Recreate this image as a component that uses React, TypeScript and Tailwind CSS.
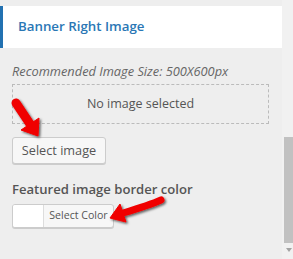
import React from "react";

const Arrows: React.FC = () => (
  <svg
    className="absolute left-0 top-0 pointer-events-none"
    width="293"
    height="259"
    viewBox="0 0 293 259"
  >
    <defs>
      <filter id="shadow" x="-20%" y="-20%" width="140%" height="140%">
        <feDropShadow dx="1.5" dy="1.5" stdDeviation="1.2" floodColor="#000" floodOpacity="0.6" />
      </filter>
    </defs>
    <g fill="#f00000" stroke="#f00000" filter="url(#shadow)">
      {/* down-right arrow */}
      <line x1="16" y1="103" x2="30" y2="124" strokeWidth="9" strokeLinecap="round" />
      <polygon points="38,136 39,118 21,130" strokeWidth="1" strokeLinejoin="round" />
      {/* left arrow */}
      <path d="M161 200 Q150 205 123 213" fill="none" strokeWidth="7" strokeLinecap="round" />
      <polygon points="110,218 120,204 126,222" strokeWidth="1" strokeLinejoin="round" />
    </g>
  </svg>
);

const App: React.FC = () => {
  return (
    <div className="relative w-[293px] h-[259px] flex bg-[#eeeeee] overflow-hidden font-['Open_Sans','Noto_Sans',sans-serif]">
      {/* Panel */}
      <div className="w-[282px] pt-[6px]">
        <div className="h-[42px] bg-white border-l-[3px] border-[#2271b1] pl-[15px] flex items-center">
          <h2 className="text-[13.3px] font-semibold text-[#2a77b5]">Banner Right Image</h2>
        </div>

        <div className="pl-[12px]">
          <p className="mt-[14px] text-[12.8px] leading-[18px] italic text-[#666]">
            Recommended Image Size: 500X600px
          </p>
          <div className="mt-[4px] w-[257px] h-[40px] border border-dashed border-[#bbb] flex items-center justify-center text-[12.5px] text-[#555]">
            No image selected
          </div>
          <button className="mt-[13px] w-[94px] h-[27px] rounded-[3px] border border-[#ccc] bg-[#f7f7f7] shadow-[0_1px_0_#ccc] text-[12.7px] text-[#555]">
            Select image
          </button>

          <h3 className="mt-[15px] text-[13.1px] leading-[20px] font-semibold text-[#555]">
            Featured image border color
          </h3>
          <div className="mt-[5px] flex w-[102px] h-[24px] rounded-[3px] border border-[#ccc] bg-[#f7f7f7] overflow-hidden shadow-[0_1px_0_#ccc]">
            <span className="w-[31px] bg-white border-r border-[#ddd]" />
            <span className="flex-1 flex items-center justify-center text-[10.6px] text-[#555]">
              Select Color
            </span>
          </div>
        </div>
      </div>

      {/* Scrollbar */}
      <div className="relative w-[11px] bg-[#f1f1f1]">
        <div className="absolute left-[2px] right-0 top-[137px] h-[106px] bg-[#c1c1c1]" />
        <div className="absolute left-[4px] top-[248px] w-0 h-0 border-l-[3px] border-r-[3px] border-t-[4px] border-l-transparent border-r-transparent border-t-[#a3a3a3]" />
      </div>

      <Arrows />
    </div>
  );
};

export default App;
